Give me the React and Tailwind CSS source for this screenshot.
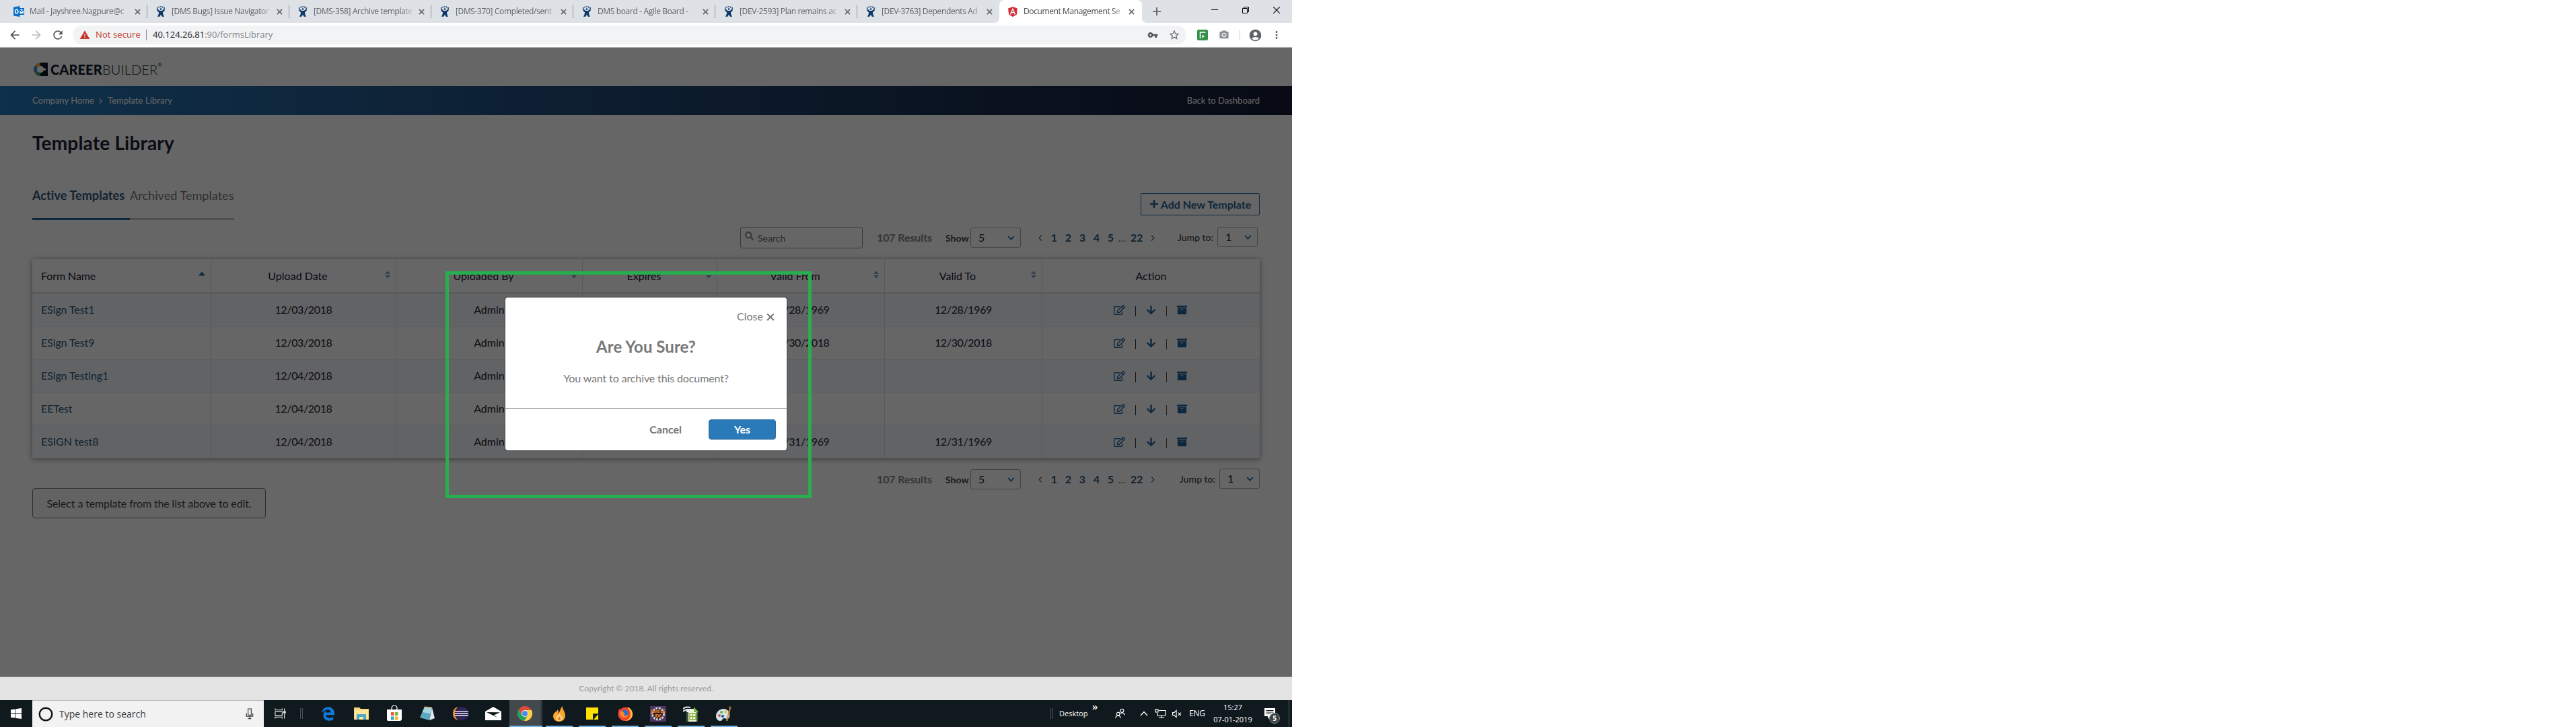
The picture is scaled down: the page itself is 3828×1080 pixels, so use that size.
import { FaAngular, FaArchive, FaArrowDown, FaEdgeLegacy, FaPlus, FaRegEdit, FaSearch } from 'react-icons/fa'
import {
  MdAccountCircle,
  MdArrowBack,
  MdArrowForward,
  MdMoreVert,
  MdPhotoCamera,
  MdRefresh,
  MdStarBorder,
  MdVpnKey,
  MdWarning,
} from 'react-icons/md'

const TABS = [
  { icon: 'outlook', title: 'Mail - Jayshree.Nagpure@c' },
  { icon: 'jira', title: '[DMS Bugs] Issue Navigator' },
  { icon: 'jira', title: '[DMS-358] Archive template' },
  { icon: 'jira', title: '[DMS-370] Completed/sent' },
  { icon: 'jira', title: 'DMS board - Agile Board - ' },
  { icon: 'jira', title: '[DEV-2593] Plan remains ac' },
  { icon: 'jira', title: '[DEV-3763] Dependents Ad' },
]

const ROWS = [
  { name: 'ESign Test1', uploaded: '12/03/2018', from: '12/28/1969', to: '12/28/1969' },
  { name: 'ESign Test9', uploaded: '12/03/2018', from: '12/30/2018', to: '12/30/2018' },
  { name: 'ESign Testing1', uploaded: '12/04/2018', from: '', to: '' },
  { name: 'EETest', uploaded: '12/04/2018', from: '', to: '' },
  { name: 'ESIGN test8', uploaded: '12/04/2018', from: '12/31/1969', to: '12/31/1969' },
]

function OutlookIcon() {
  return (
    <svg viewBox="0 0 16 16" className="w-4 h-4 shrink-0">
      <path d="M8 3h8v10H8z" fill="#0a72c6" />
      <path d="M9 5h6v6H9z" fill="#fff" />
      <path d="M9 5l3 3.5L15 5" fill="none" stroke="#0a72c6" strokeWidth="1.2" />
      <path d="M0 1.5L9.5 0v16L0 14.5z" fill="#0a72c6" />
      <ellipse cx="4.7" cy="8" rx="2.2" ry="2.8" fill="none" stroke="#fff" strokeWidth="1.4" />
    </svg>
  )
}

function JiraIcon() {
  return (
    <svg viewBox="0 0 16 16" className="w-4 h-4 shrink-0" fill="#0d3a6b">
      <circle cx="5.2" cy="1.4" r="1" />
      <circle cx="8" cy="0.9" r="0.9" />
      <circle cx="10.8" cy="1.4" r="1" />
      <circle cx="2.8" cy="3" r="1" />
      <circle cx="13.2" cy="3" r="1" />
      <circle cx="8" cy="4.6" r="1.3" />
      <path d="M1.800 4.800h2.200c.8 1.600 2 2.300 4 2.300s3.200-.7 4-2.300h2.200c-.3 2-1.500 3.500-3.200 4.400 0 2 .6 4.200 2 6.600H9.800L8 12.800l-1.800 3H3c1.400-2.400 2-4.600 2-6.600-1.700-.9-2.900-2.400-3.200-4.400z" />
    </svg>
  )
}

function CloseX({ className }) {
  return (
    <svg viewBox="0 0 10 10" className={`shrink-0 ${className}`}>
      <path d="M1 1l8 8M9 1l-8 8" stroke="currentColor" strokeWidth="1.7" fill="none" />
    </svg>
  )
}

function BrowserTabs() {
  return (
    <div className="h-[34px] bg-[#dee1e6] flex pl-2 font-['Open_Sans',sans-serif] text-[12px] tracking-[-0.36px]">
      {TABS.map((tab, i) => (
        <div key={tab.title} className="w-[211px] h-full pl-3 flex items-center">
          {tab.icon === 'outlook' ? <OutlookIcon /> : <JiraIcon />}
          <span className="ml-2 w-[150px] whitespace-nowrap text-[#5f6368] [mask-image:linear-gradient(to_right,black_88%,transparent)]">
            {tab.title}
          </span>
          <CloseX className="ml-[6px] w-[9px] h-[9px] text-[#5f6368]" />
          {i < TABS.length - 1 && <span className="ml-auto w-px h-5 bg-[#8f9399]" />}
        </div>
      ))}
      <div className="relative w-[212px] h-full pl-3 flex items-center bg-white rounded-t-lg">
        <svg viewBox="0 0 8 8" className="absolute -left-2 bottom-0 w-2 h-2">
          <path d="M8 0v8H0c5 0 8-3 8-8z" fill="#fff" />
        </svg>
        <svg viewBox="0 0 8 8" className="absolute -right-2 bottom-0 w-2 h-2">
          <path d="M0 0v8h8C3 8 0 5 0 0z" fill="#fff" />
        </svg>
        <FaAngular className="w-4 h-[17px] text-[#cf3339]" />
        <span className="ml-2 w-[150px] whitespace-nowrap tracking-[-0.4px] text-[#45494d] [mask-image:linear-gradient(to_right,black_88%,transparent)]">
          Document Management Se
        </span>
        <CloseX className="ml-[6px] w-[9px] h-[9px] text-[#5f6368]" />
      </div>
      <svg viewBox="0 0 12 12" className="w-3 h-3 ml-[16px] mt-[11px]">
        <path d="M6 0v12M0 6h12" stroke="#55595d" strokeWidth="1.700" />
      </svg>
      <div className="ml-auto flex h-[29px] text-black">
        <div className="w-[46px] flex items-center justify-center">
          <span className="w-[10px] h-px bg-black" />
        </div>
        <div className="w-[46px] flex items-center justify-center">
          <svg viewBox="0 0 10 10" className="w-[10px] h-[10px]" fill="none" stroke="#000">
            <path d="M.5 2.500h7v7h-7zM2.500 2.500v-2h7v7h-2" />
          </svg>
        </div>
        <div className="w-[46px] flex items-center justify-center">
          <svg viewBox="0 0 10 10" className="w-[10px] h-[10px]">
            <path d="M0 0l10 10M10 0L0 10" stroke="#000" strokeWidth="1.100" />
          </svg>
        </div>
      </div>
    </div>
  )
}

function AddressBar() {
  return (
    <div className="h-[37px] bg-white border-b border-[#a9aca9] flex items-center pl-[6px] text-[#5f6368]">
      <div className="w-8 flex justify-center"><MdArrowBack className="w-5 h-5 text-[#4f5357]" /></div>
      <div className="w-8 flex justify-center"><MdArrowForward className="w-5 h-5 text-[#b9bbbd]" /></div>
      <div className="w-8 flex justify-center"><MdRefresh className="w-5 h-5 text-[#4f5357]" /></div>
      <div className="ml-[6px] w-[1655px] h-7 rounded-full bg-[#f1f3f4] flex items-center font-['Open_Sans',sans-serif] text-[13px]">
        <MdWarning className="ml-[10px] w-4 h-4 text-[#c5392d]" />
        <span className="ml-2 w-[75px] text-[#c5392d] tracking-[0.1px] whitespace-nowrap">Not secure</span>
        <span className="w-px h-4 bg-[#8a8e92]" />
        <span className="ml-[9px] text-[#80868b]">
          <span className="text-[#202124]">40.124.26.81</span>:90/formsLibrary
        </span>
        <MdVpnKey className="ml-auto w-4 h-4 text-[#4f5357]" />
        <MdStarBorder className="ml-[15px] mr-[9px] w-[18px] h-[18px]" />
      </div>
      <div className="ml-4 w-4 h-4 bg-[#35904a] rounded-[2px] flex items-center justify-center">
        <svg viewBox="0 0 16 16" className="w-4 h-4">
          <path d="M4.500 13V4h8" fill="none" stroke="#fff" strokeWidth="1.500" />
          <path d="M7.500 13V7.500L11 10l-2.500 1.800" fill="#fff" />
        </svg>
      </div>
      <MdPhotoCamera className="ml-4 w-4 h-4 text-[#909396]" />
      <span className="ml-[15px] w-px h-4 bg-[#c9cbcd]" />
      <MdAccountCircle className="ml-[12px] w-[21px] h-[21px]" />
      <MdMoreVert className="ml-[12px] w-[18px] h-[18px]" />
    </div>
  )
}

function CareerBuilderLogo() {
  return (
    <div className="flex items-center h-[21px] text-[#101c30]">
      <svg viewBox="0 0 21 20" className="w-[21px] h-5">
        <path d="M10 0h11v20H10z" fill="#0b1626" />
        <circle cx="10" cy="10" r="10" fill="#fff" />
        <path d="M10 0v5a5 5 0 0 0-4 2L2.500 3.500A10 10 0 0 1 10 0z" fill="#f2a536" />
        <path d="M2.200 4L5.600 7.500a5 5 0 0 0 0 5L2 16a10 10 0 0 1 .2-12z" fill="#3d8bbd" />
        <path d="M2.500 16.500L6 13a5 5 0 0 0 4 2v5a10 10 0 0 1-7.500-3.500z" fill="#3a9a62" />
        <path d="M10 0h11v20H10v-5a5 5 0 0 0 5-3.500h3V8.500h-3A5 5 0 0 0 10 5z" fill="#0b1626" />
      </svg>
      <span className="ml-1 w-[77px] font-black text-[20px] leading-5 tracking-[0.1px]">CAREER</span>
      <span className="font-light text-[20px] leading-5 tracking-[0.1px]">BUILDER</span>
      <span className="text-[8px] leading-none self-start">®</span>
    </div>
  )
}

function SortIcon({ dir }) {
  if (dir === 'up') {
    return (
      <svg viewBox="0 0 10 12" className="absolute right-[8px] top-[17px] w-[10px] h-3">
        <path d="M0 7.500L5 1.500l5 6z" fill="#2a6f9f" />
      </svg>
    )
  }
  return (
    <svg viewBox="0 0 8 12" className="absolute right-[8px] top-[17px] w-2 h-3" fill="#7fa3bd">
      <path d="M0 5l4-4.500L8 5zM0 7h8l-4 4.500z" />
    </svg>
  )
}

function Select({ value, className }) {
  return (
    <div className={`h-[30px] border border-[#a8acb0] rounded-[3px] flex items-center justify-between pl-[11px] pr-[8px] text-[16px] leading-none text-[#1a2233] ${className}`}>
      <span>{value}</span>
      <svg viewBox="0 0 12 8" className="w-[11px] h-[7px] mt-px">
        <path d="M1 1l5 5.500L11 1" fill="none" stroke="#2774ae" strokeWidth="2" />
      </svg>
    </div>
  )
}

function Pagination({ bottom }) {
  return (
    <div className="flex items-center h-8 whitespace-nowrap">
      <span className="w-[102px] pb-px text-[16px] font-bold text-[#858585] tracking-[-0.1px]">107 Results</span>
      <span className="w-[37px] text-[14px] font-bold text-[#444] pt-px">Show</span>
      <Select value="5" className="w-[75px]" />
      <div className="ml-[19px] pb-px flex items-center text-center text-[16px] font-bold text-[#2b587c]">
        <svg viewBox="0 0 6 10" className="w-[6px] h-[9px] mx-[7px] mt-px">
          <path d="M5 .5L1 5l4 4.500" fill="none" stroke="#555" strokeWidth="1.300" />
        </svg>
        {[1, 2, 3, 4, 5].map(n => (
          <span key={n} className="w-[21px]">{n}</span>
        ))}
        <span className="w-[13px] text-[#777] font-normal">...</span>
        <span className="w-[30px]">22</span>
        <svg viewBox="0 0 6 10" className="w-[6px] h-[9px] mx-[6px] mt-px">
          <path d="M1 .5L5 5 1 9.500" fill="none" stroke="#555" strokeWidth="1.300" />
        </svg>
      </div>
      <span className={`w-[59px] pb-px text-[14px] font-medium text-[#444] ${bottom ? 'ml-[31px]' : 'ml-[28px]'}`}>Jump to:</span>
      <Select value="1" className={bottom ? 'w-[60px] mb-[2px]' : 'w-[60px] mb-[2px] mr-[3px]'} />
    </div>
  )
}

function TemplatesTable() {
  const cell = 'border-r border-[#d9dee3]'
  return (
    <table className="w-[1824px] table-fixed border-separate border-spacing-0 text-[16px] text-[#1a2233] shadow-[0_1px_8px_rgba(0,0,0,0.45)]">
      <colgroup>
        <col className="w-[266px]" />
        <col className="w-[275px]" />
        <col className="w-[277px]" />
        <col className="w-[200px]" />
        <col className="w-[249px]" />
        <col className="w-[234px]" />
        <col className="w-[323px]" />
      </colgroup>
      <thead>
        <tr className="h-[51px]">
          <th className={`relative text-left font-normal pl-[13px] border-b-2 tracking-[-0.1px] ${cell}`}>Form Name<SortIcon dir="up" /></th>
          {['Upload Date', 'Uploaded By', 'Expires', 'Valid From', 'Valid To'].map(label => (
            <th key={label} className={`relative font-normal pr-[17px] border-b-2 ${cell}`}>{label}<SortIcon /></th>
          ))}
          <th className="font-normal border-b-2 border-[#d9dee3]">Action</th>
        </tr>
      </thead>
      <tbody className="text-center">
        {ROWS.map((row, i) => (
          <tr key={row.name} className={i % 2 === 0 ? 'h-[49px] bg-[#f4f8fb]' : 'h-[49px]'}>
            <td className={`text-left pl-[13px] tracking-[-0.1px] text-[#2d597d] border-b ${cell}`}>{row.name}</td>
            <td className={`tracking-[-0.36px] border-b ${cell}`}>{row.uploaded}</td>
            <td className={`border-b ${cell}`}>Admin</td>
            <td className={`border-b ${cell}`} />
            <td className={`tracking-[-0.36px] border-b ${cell}`}>{row.from}</td>
            <td className={`tracking-[-0.36px] border-b ${cell}`}>{row.to}</td>
            <td className="border-b border-[#d9dee3] pr-[2px]">
              <div className="flex items-center justify-center text-[#21639a]">
                <FaRegEdit className="w-[17px] h-[15px]" />
                <span className="w-px h-[15px] mt-1 bg-[#333] mx-[15px]" />
                <FaArrowDown className="w-[15px] h-[15px]" />
                <span className="w-px h-[15px] mt-1 bg-[#555] mx-[15px]" />
                <FaArchive className="w-[15px] h-[15px]" />
              </div>
            </td>
          </tr>
        ))}
      </tbody>
    </table>
  )
}

function ConfirmDialog() {
  return (
    <div className="absolute left-[751px] top-[442px] w-[418px] h-[227px] bg-white rounded-[4px] shadow-[0_0_2px_rgba(0,0,0,0.7)] text-[#777] flex flex-col pt-[18px]">
      <div className="flex items-center justify-end h-5 pr-[18px] text-[16px]">
        Close
        <CloseX className="ml-[5px] mt-px w-3 h-3 text-[#777]" />
      </div>
      <h2 className="mt-5 h-[30px] leading-[30px] text-center text-[24px] font-bold tracking-[0.05px]">Are You Sure?</h2>
      <p className="mt-[22px] h-5 leading-5 text-center text-[16px] tracking-[-0.12px]">You want to archive this document?</p>
      <div className="mt-[34px] border-t border-[#8f8f8f] flex justify-end items-start pt-4 pr-4">
        <button className="h-[30px] mr-[40px] text-[16px] font-bold text-[#777]">Cancel</button>
        <button className="h-[30px] w-[100px] rounded-[4px] border border-[#2e6c9c] bg-[#2a79b8] text-white text-[16px] font-bold">Yes</button>
      </div>
    </div>
  )
}

function TaskIcon({ children, underline = false }) {
  return (
    <div className="relative w-[49px] h-full flex items-center justify-center">
      {children}
      {underline && <span className="absolute left-[5px] bottom-0 w-10 h-[2px] bg-[#76b3e4]" />}
    </div>
  )
}

function Taskbar() {
  return (
    <div className="h-10 bg-[#10191e] flex items-center text-white font-['Open_Sans',sans-serif]">
      <div className="w-12 flex justify-center">
        <svg viewBox="0 0 16 16" className="w-4 h-4" fill="#fff">
          <path d="M0 2.300L6.500 1.400v6.200H0zM7.300 1.300L16 0v7.600H7.300zM0 8.400h6.500v6.200L0 13.700zM7.300 8.400H16V16l-8.700-1.300z" />
        </svg>
      </div>
      <div className="w-[344px] h-full bg-[#f2f2f2] border-t border-[#b5b5b5] flex items-center pl-[9px]">
        <svg viewBox="0 0 22 22" className="w-[22px] h-[22px]">
          <circle cx="11" cy="11" r="9.3" fill="none" stroke="#111" strokeWidth="2.400" />
        </svg>
        <span className="ml-[9px] text-[14px] text-[#3b3b3b]">Type here to search</span>
        <svg viewBox="0 0 12 18" className="ml-auto mr-[15px] w-3 h-[17px]" fill="none" stroke="#333" strokeWidth="1.200">
          <path d="M3.500 1h5v10h-5zM1 8v5h10V8M6 13v4M3.500 16.500h5" />
        </svg>
      </div>
      <div className="w-12 flex justify-center">
        <svg viewBox="0 0 18 16" className="w-[17px] h-4" fill="none" stroke="#e4e6e7" strokeWidth="1.200">
          <path d="M1 0v2.500h11V0M1 5h11v6H1zM1 16v-2.500h11V16M15.500 0v4M15.500 9v7" />
          <path d="M14.500 4.500h2.500v3h-2.500z" fill="#fff" />
        </svg>
      </div>
      <div className="w-[23px] flex gap-[2px] pl-[6px]">
        <span className="w-px h-4 bg-[#4a5257]" />
        <span className="w-px h-4 bg-[#4a5257]" />
      </div>

      <TaskIcon><FaEdgeLegacy className="w-[21px] h-[21px] text-[#0f7ad8]" /></TaskIcon>
      <TaskIcon>
        <svg viewBox="0 0 22 20" className="w-[22px] h-5">
          <path d="M0 1h8l2 2h12v16H0z" fill="#f6d777" />
          <path d="M1 5h20v14H1z" fill="#fbe699" />
          <path d="M4 19v-8h14v8h-4v-4H8v4z" fill="#49a9cf" />
        </svg>
      </TaskIcon>
      <TaskIcon>
        <svg viewBox="0 0 24 24" className="w-6 h-6">
          <path d="M8 8V4a4 4 0 0 1 8 0v4" fill="none" stroke="#fff" strokeWidth="1.300" />
          <path d="M1 6h22v15l-2 2H2l-1-2z" fill="#fff" />
          <path d="M7 10h4.500v5H7z" fill="#e65a3c" />
          <path d="M13 10h4.500v5H13z" fill="#7fb52b" />
          <path d="M7 16.500h4.500v5H7z" fill="#2da3dc" />
          <path d="M13 16.500h4.500v5H13z" fill="#f6b91d" />
        </svg>
      </TaskIcon>
      <TaskIcon>
        <svg viewBox="0 0 22 22" className="w-[22px] h-[22px]">
          <path d="M18 2l4 16-8 3z" fill="#dfe8ea" />
          <path d="M7 1l11 1-4 19L0 17z" fill="#5fa9bf" />
          <path d="M7 1l11 1-2 9L3.500 9z" fill="#a5d5e0" />
          <path d="M7 .5l11 1-.3 1.500L6.300 2z" fill="#c9a878" />
        </svg>
      </TaskIcon>
      <TaskIcon>
        <svg viewBox="0 0 24 22" className="w-6 h-[22px]">
          <path d="M9 1C3 2 1 7 1 11s2 9 8 10C5 18 4 14 4 11s1-7 5-10z" fill="#ee8f32" />
          <circle cx="14" cy="11" r="10" fill="#2f2458" />
          <path d="M4 7.500h20v1.500H4zM4 10.300h20v1.500H4zM4 13.100h20v1.500H4z" fill="#e6e3f0" />
        </svg>
      </TaskIcon>
      <TaskIcon>
        <svg viewBox="0 0 24 20" className="w-6 h-5">
          <path d="M0 7l12-7 12 7v13H0z" fill="#fff" />
          <path d="M2 8l20 .2-9 4.300 6 4z" fill="#10191e" />
        </svg>
      </TaskIcon>
      <div className="relative w-[49px] h-full flex items-center justify-center bg-[#434a4d] border-r-[3px] border-[#303a40]">
        <svg viewBox="0 0 22 22" className="w-[22px] h-[22px]">
          <circle cx="11" cy="11" r="11" fill="#dc4a3d" />
          <path d="M1.500 5.500A11 11 0 0 0 10 22l5-8.600-4 1.600-4-2z" fill="#23a25b" />
          <path d="M11 6h9.800A11 11 0 0 1 10 22l5.500-9z" fill="#fdd047" />
          <circle cx="11" cy="11" r="5" fill="#f4f4f4" />
          <circle cx="11" cy="11" r="4" fill="#4a87ee" />
        </svg>
        <span className="absolute left-0 bottom-0 w-[49px] h-[2px] bg-[#76b3e4]" />
      </div>
      <TaskIcon underline>
        <svg viewBox="0 0 20 23" className="w-5 h-[23px]">
          <path d="M15 0c-1 4 4 8 4 14 0 5-4 9-9 9s-9-3-9-8c0-6 5-6 7-10 1 2 1 4 0 6 4-2 3-8 7-11z" fill="#f7a52c" />
          <path d="M11 10c0 4 4 4 4 8 0 3-2 4-5 4s-5-2-5-5c0-3 4-3 6-7z" fill="#fbd27c" />
          <path d="M10 15c1 2 2 2 2 4s-1 2-2 2-2-1-2-2 1-2 2-4z" fill="#e77a1c" />
        </svg>
      </TaskIcon>
      <TaskIcon underline>
        <svg viewBox="0 0 18 18" className="w-[18px] h-[18px]">
          <path d="M0 0h18v9h-8v9H0z" fill="#fde100" />
          <path d="M10 18V9h8z" fill="#1c1c1c" />
          <path d="M11 18l7-8v8z" fill="#fde100" />
        </svg>
      </TaskIcon>
      <TaskIcon underline>
        <svg viewBox="0 0 22 22" className="w-[22px] h-[22px]">
          <path d="M2 4l2 1c2-2 5-4 9-3 6 1 9 5 9 10a10.500 10 0 0 1-21.500 0C.5 9 1 7 2 4z" fill="#f0462f" />
          <path d="M14 1c5 2 8 6 8 11 0 6-5 10-11 10 6-2 8-6 8-10s-2-7-5-11z" fill="#fdc934" />
          <circle cx="11" cy="10" r="4.500" fill="#2d6fc8" />
          <path d="M3 8c3-1 5 0 6 2 2 0 2 2 0 2 0 2 3 3 6 1-1 4-4 5-7 4s-5-4-5-9z" fill="#f98a24" />
        </svg>
      </TaskIcon>
      <TaskIcon underline>
        <div className="relative w-6 h-[23px] bg-[#4c3561] flex items-center justify-center">
          <svg viewBox="0 0 24 23" className="absolute inset-0 w-6 h-[23px]">
            <circle cx="12" cy="11.500" r="8.500" fill="#2a1c1c" stroke="#d7d4d9" strokeWidth="3" strokeDasharray="3 1.500" />
          </svg>
          <span className="relative text-[7px] leading-[7px] font-bold text-[#e88434] text-center tracking-[-0.5px] whitespace-nowrap">Java EE<br />IDE</span>
        </div>
      </TaskIcon>
      <TaskIcon underline>
        <svg viewBox="0 0 24 23" className="w-6 h-[23px]">
          <path d="M5 4h13l4 4v15H5z" fill="#edf3df" />
          <path d="M16 1l7 8h-7z" fill="#7fb241" />
          <path d="M5 9h3v14H5zM20 9h2v14h-2z" fill="#3b5a3a" />
          <path d="M10 11h9v9h-9zM14.500 11v9M10 15.500h9" fill="#fff" stroke="#84b02e" strokeWidth="1.500" />
          <path d="M0 4c3-3 6-3 11-2M0 8c3-3 7-3 11-3" fill="none" stroke="#dfe6ea" strokeWidth="2" />
        </svg>
      </TaskIcon>
      <TaskIcon underline>
        <svg viewBox="0 0 24 23" className="w-6 h-[23px]">
          <path d="M11 4C5 4 0 9 0 15c0 4 3 7 6 7 4 0 3-4 6-4s6 3 8-2c2-7-3-12-9-12z" fill="#cfe4ee" />
          <circle cx="5" cy="14" r="2" fill="#d7563f" />
          <circle cx="8" cy="9" r="2" fill="#6bb245" />
          <circle cx="14" cy="8.500" r="2" fill="#eec03a" />
          <circle cx="10" cy="15" r="2" fill="#1f4d84" />
          <path d="M21 3l-5 19" stroke="#c98a44" strokeWidth="2.200" />
          <path d="M19 0l4 1-1 5h-3z" fill="#8d5a34" />
        </svg>
      </TaskIcon>

      <div className="ml-auto h-full flex items-center text-[11px]">
        <div className="w-4 flex gap-[2px] pl-[3px]">
          <span className="w-px h-4 bg-[#4a5257]" />
          <span className="w-px h-4 bg-[#4a5257]" />
        </div>
        <span className="w-[49px]">Desktop</span>
        <span className="w-3 text-[15px] font-semibold leading-none mb-[22px]">»</span>
        <div className="w-[58px] flex justify-center">
          <svg viewBox="0 0 16 16" className="w-[15px] h-4" fill="none" stroke="#fff" strokeWidth="1.200">
            <circle cx="11" cy="3.500" r="2.700" />
            <circle cx="5" cy="8.500" r="2.500" />
            <path d="M1 15.500c0-3 2-4.500 4-4.500s3.500 1.500 3.500 4.500M8.500 8c1-1.500 6-2.500 6.500 2.500" />
          </svg>
        </div>
        <svg viewBox="0 0 12 8" className="mx-[1px] w-3 h-2">
          <path d="M1 7l5-5.500L11 7" fill="none" stroke="#fff" strokeWidth="1.300" />
        </svg>
        <div className="w-[34px] flex justify-center">
          <svg viewBox="0 0 17 14" className="w-[17px] h-[14px]" fill="none" stroke="#fff" strokeWidth="1.200">
            <path d="M6 2.500h10v7.500H4V6M10 10v3M6 13h8M1 .8h4v4H1z" />
          </svg>
        </div>
        <svg viewBox="0 0 16 14" className="w-4 h-[13px]" fill="none" stroke="#fff" strokeWidth="1.200">
          <path d="M1 5h2.500L7 1.500v11L3.500 9H1zM10 5l4.500 4.500M14.500 5L10 9.500" />
        </svg>
        <span className="w-11 text-center text-[12px] tracking-[-0.3px]">ENG</span>
        <div className="w-[62px] text-center leading-[18px] whitespace-nowrap">
          15:27<br />07-01-2019
        </div>
        <div className="relative w-12 h-full flex items-center justify-center">
          <svg viewBox="0 0 16 16" className="w-4 h-4">
            <path d="M0 0h16v12H9l-4 4v-4H0z" fill="#fff" />
            <path d="M2.500 3.500h11M2.500 6h11M2.500 8.500h7" stroke="#10191e" />
          </svg>
          <span className="absolute left-[23px] top-[19px] w-4 h-4 rounded-full bg-[#3a3f42] border border-[#8b9093] text-[10px] font-bold leading-[14px] text-center">5</span>
        </div>
        <div className="w-[9px] h-full pl-[4px]">
          <div className="w-px h-full bg-[#5a6166]" />
        </div>
      </div>
    </div>
  )
}

export default function App() {
  return (
    <div className="w-[3828px] h-[1080px] bg-white overflow-hidden">
      <div className="relative w-[1920px] h-[1080px] flex flex-col font-[Lato,sans-serif]">
        <BrowserTabs />
        <AddressBar />

        <div className="relative h-[934px] bg-white flex flex-col">
          <header className="h-[57px] pl-[50px] pt-[21px]">
            <CareerBuilderLogo />
          </header>
          <nav className="h-[43px] px-12 flex items-center text-[13px] text-white bg-linear-to-r from-[#2578b9] to-[#141b33]">
            <span className="w-[91px] whitespace-nowrap">Company Home</span>
            <svg viewBox="0 0 6 10" className="w-[5px] h-2 mx-[8px]">
              <path d="M1 .5L5 5 1 9.500" fill="none" stroke="#fff" strokeWidth="1.500" />
            </svg>
            <span className="tracking-[0.08px]">Template Library</span>
            <span className="ml-auto">Back to Dashboard</span>
          </nav>

          <main className="px-12 pt-5">
            <h1 className="h-[42px] leading-[42px] text-[28px] font-bold text-[#1a2233] tracking-[0.18px]">Template Library</h1>
            <div className="mt-[45px] h-[49px] flex items-start">
              <div className="h-[49px] w-[145px] border-b-[3px] border-[#25669b] text-[18px] leading-6 font-bold tracking-[0.07px] text-[#2b587c] whitespace-nowrap">
                Active Templates
              </div>
              <div className="h-[49px] w-[155px] border-b-[3px] border-[#c4c4c4] text-[18px] leading-6 tracking-[0.05px] text-[#777] whitespace-nowrap">
                Archived Templates
              </div>
              <button className="ml-auto mt-[9px] w-[177px] h-[33px] rounded-[2px] border border-[#2774ae] flex items-center justify-center gap-[3px] text-[16px] font-bold text-[#2b6594] whitespace-nowrap">
                <FaPlus className="w-[14px] h-[14px] mb-0.5" />
                Add New Template
              </button>
            </div>

            <div className="mt-[10px] flex justify-end">
              <div className="mr-[21px] w-[182px] h-8 border border-[#8f8f8f] rounded-[3px] flex items-center pl-[6px] text-[14px] text-[#6a6a6a]">
                <FaSearch className="w-[13px] h-[13px] mb-[5px] mr-[6px] text-[#8a8a8a]" />
                <span>Search</span>
              </div>
              <Pagination />
            </div>

            <div className="mt-4">
              <TemplatesTable />
            </div>

            <div className="flex items-start justify-between">
              <div className="mt-11 w-[347px] h-[45px] border border-[#777] rounded-[4px] bg-[#fbf7f7] flex items-center justify-center text-[16px] tracking-[-0.13px] text-[#444] whitespace-nowrap">
                Select a template from the list above to edit.
              </div>
              <div className="mt-[15px]">
                <Pagination bottom />
              </div>
            </div>
          </main>
          <div className="absolute inset-0 bg-black/60" />
        </div>

        <footer className="h-[35px] bg-[#e4e4e4] border-t border-[#8c8c8c] flex items-center justify-center text-[12px] text-[#999]">
          Copyright © 2018. All rights reserved.
        </footer>
        <Taskbar />

        <ConfirmDialog />
        {/* highlight frame around the dialog */}
        <div className="absolute left-[662px] top-[403px] w-[544px] h-[337px] border-[5px] border-[#27ae4e]" />
      </div>
    </div>
  )
}
